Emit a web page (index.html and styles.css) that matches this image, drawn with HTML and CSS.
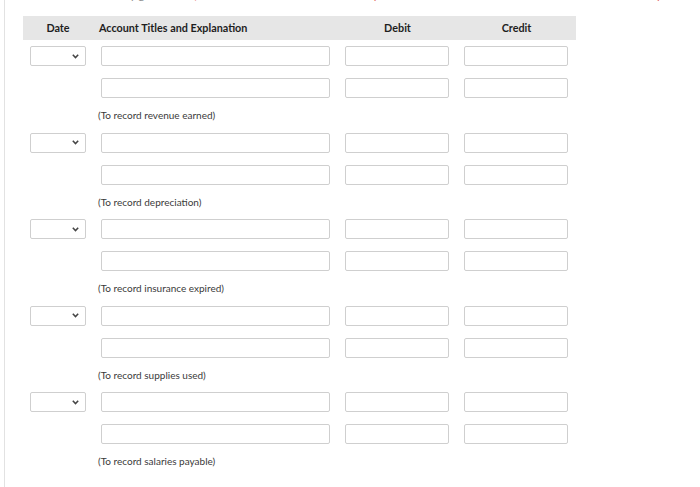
FILE: index.html
```html
<!DOCTYPE html>
<html lang="en">
<head>
<meta charset="utf-8">
<title>Journal Entries</title>
<link rel="stylesheet" href="styles.css">
</head>
<body>
<div class="sheet">
  <div class="intro"><p class="intro-text"><span class="lead">Journalize by given data.</span> <span class="hint">(Credit account titles are automatically indented when amount is entered. Do not indent manually. If no entry is required, select "No Entry" for the account titles and enter 0 for the amounts.)</span></p></div>

  <div class="journal">
    <div class="row head">
      <div class="th center">Date</div>
      <div class="th left">Account Titles and Explanation</div>
      <div class="th center">Debit</div>
      <div class="th center">Credit</div>
    </div>

    <div class="group">
      <div class="row line">
        <div class="cell date"><div class="select"><svg width="7" height="5" viewBox="0 0 7 5"><path d="M0.8 0.8 L3.5 3.6 L6.2 0.8" fill="none" stroke="#444" stroke-width="1.5"/></svg></div></div>
        <div class="cell acct"><input type="text"></div>
        <div class="cell amt"><input type="text"></div>
        <div class="cell amt"><input type="text"></div>
      </div>
      <div class="row line">
        <div class="cell date"></div>
        <div class="cell acct"><input type="text"></div>
        <div class="cell amt"><input type="text"></div>
        <div class="cell amt"><input type="text"></div>
      </div>
      <div class="row">
        <div class="cell"></div>
        <div class="note">(To record revenue earned)</div>
      </div>
    </div>

    <div class="group">
      <div class="row line">
        <div class="cell date"><div class="select"><svg width="7" height="5" viewBox="0 0 7 5"><path d="M0.8 0.8 L3.5 3.6 L6.2 0.8" fill="none" stroke="#444" stroke-width="1.5"/></svg></div></div>
        <div class="cell acct"><input type="text"></div>
        <div class="cell amt"><input type="text"></div>
        <div class="cell amt"><input type="text"></div>
      </div>
      <div class="row line">
        <div class="cell date"></div>
        <div class="cell acct"><input type="text"></div>
        <div class="cell amt"><input type="text"></div>
        <div class="cell amt"><input type="text"></div>
      </div>
      <div class="row">
        <div class="cell"></div>
        <div class="note">(To record depreciation)</div>
      </div>
    </div>

    <div class="group">
      <div class="row line">
        <div class="cell date"><div class="select"><svg width="7" height="5" viewBox="0 0 7 5"><path d="M0.8 0.8 L3.5 3.6 L6.2 0.8" fill="none" stroke="#444" stroke-width="1.5"/></svg></div></div>
        <div class="cell acct"><input type="text"></div>
        <div class="cell amt"><input type="text"></div>
        <div class="cell amt"><input type="text"></div>
      </div>
      <div class="row line">
        <div class="cell date"></div>
        <div class="cell acct"><input type="text"></div>
        <div class="cell amt"><input type="text"></div>
        <div class="cell amt"><input type="text"></div>
      </div>
      <div class="row">
        <div class="cell"></div>
        <div class="note">(To record insurance expired)</div>
      </div>
    </div>

    <div class="group">
      <div class="row line">
        <div class="cell date"><div class="select"><svg width="7" height="5" viewBox="0 0 7 5"><path d="M0.8 0.8 L3.5 3.6 L6.2 0.8" fill="none" stroke="#444" stroke-width="1.5"/></svg></div></div>
        <div class="cell acct"><input type="text"></div>
        <div class="cell amt"><input type="text"></div>
        <div class="cell amt"><input type="text"></div>
      </div>
      <div class="row line">
        <div class="cell date"></div>
        <div class="cell acct"><input type="text"></div>
        <div class="cell amt"><input type="text"></div>
        <div class="cell amt"><input type="text"></div>
      </div>
      <div class="row">
        <div class="cell"></div>
        <div class="note">(To record supplies used)</div>
      </div>
    </div>

    <div class="group">
      <div class="row line">
        <div class="cell date"><div class="select"><svg width="7" height="5" viewBox="0 0 7 5"><path d="M0.8 0.8 L3.5 3.6 L6.2 0.8" fill="none" stroke="#444" stroke-width="1.5"/></svg></div></div>
        <div class="cell acct"><input type="text"></div>
        <div class="cell amt"><input type="text"></div>
        <div class="cell amt"><input type="text"></div>
      </div>
      <div class="row line">
        <div class="cell date"></div>
        <div class="cell acct"><input type="text"></div>
        <div class="cell amt"><input type="text"></div>
        <div class="cell amt"><input type="text"></div>
      </div>
      <div class="row">
        <div class="cell"></div>
        <div class="note">(To record salaries payable)</div>
      </div>
    </div>
  </div>
</div>
</body>
</html>
```

FILE: styles.css
```css
html, body {
  margin: 0;
  padding: 0;
  background: #ffffff;
}

body {
  font-family: Lato, "Open Sans", Arial, sans-serif;
  color: #222;
  overflow: hidden;
}

.sheet {
  margin-left: 4px;
  border-left: 1px solid #e2e2e2;
  padding-left: 18px;
  min-height: 487px;
  box-sizing: border-box;
}

.intro {
  height: 4px;
  overflow: hidden;
  margin-bottom: 12px;
}

.intro-text {
  margin: -12px 0 0 50px;
  font-size: 11px;
  line-height: 14px;
  white-space: nowrap;
}

.lead {
  color: #888;
}

.hint {
  color: #e0544c;
}

.journal {
  width: 553px;
}

.row {
  display: grid;
  grid-template-columns: 70px 245px 119px 119px;
}

.head {
  background: #e6e6e6;
  height: 24px;
  align-items: center;
}

.th {
  font-size: 10.8px;
  font-weight: 700;
  line-height: 14px;
  color: #1e1e1e;
}

.center {
  text-align: center;
}

.left {
  text-align: left;
  padding-left: 6px;
}

.group {
  padding-top: 6px;
  padding-bottom: 4.5px;
}

.line {
  height: 20px;
}

.line + .line {
  margin-top: 12px;
}

.cell {
  box-sizing: border-box;
}

.date {
  padding-left: 7px;
}

.acct {
  padding: 0 8px;
}

.amt {
  padding: 0 8px 0 7px;
}

input {
  display: block;
  box-sizing: border-box;
  width: 100%;
  height: 20px;
  margin: 0;
  padding: 0 4px;
  border: 1px solid #cfcfcf;
  border-radius: 2px;
  background: #fff;
  font: inherit;
}

.select {
  box-sizing: border-box;
  width: 56px;
  height: 20px;
  border: 1px solid #cfcfcf;
  border-radius: 2px;
  background: #fff;
  display: flex;
  align-items: center;
  justify-content: flex-end;
  padding-right: 6px;
}

.select svg {
  display: block;
}

.note {
  grid-column: 2 / 5;
  padding: 10px 0 0 5px;
  font-size: 10px;
  line-height: 14px;
  color: #3a3a3a;
}
```
